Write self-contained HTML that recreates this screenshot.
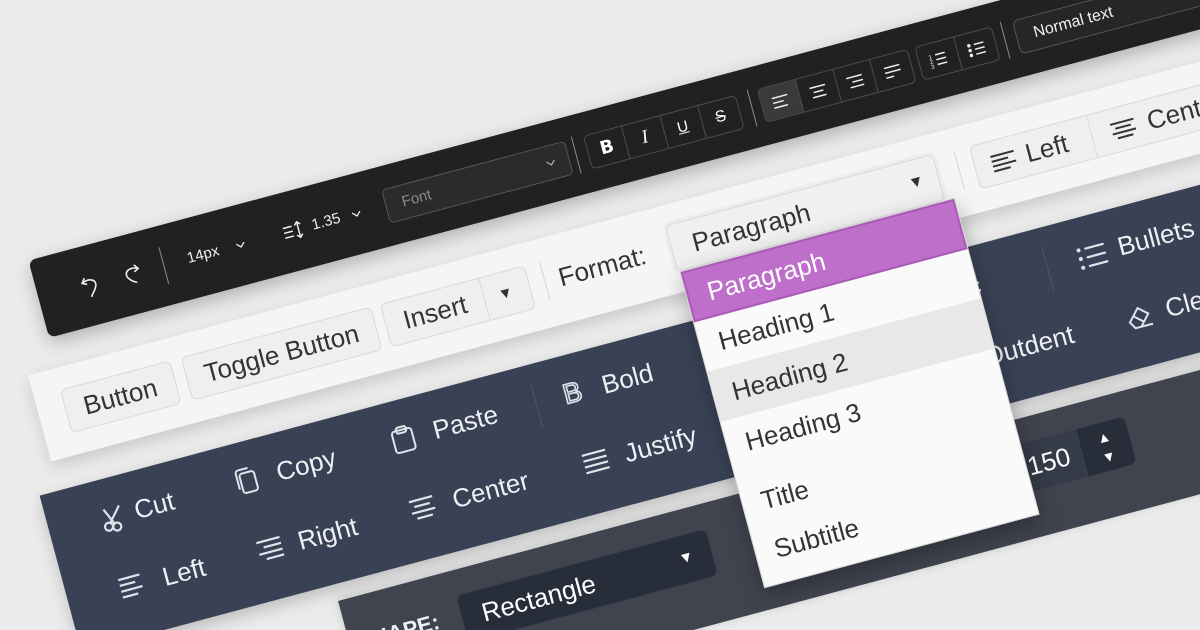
<!DOCTYPE html>
<html><head><meta charset="utf-8"><style>
*{box-sizing:border-box;margin:0;padding:0}
html,body{width:1200px;height:630px;overflow:hidden;background:#ebebeb;font-family:"Liberation Sans","DejaVu Sans",sans-serif}
#clip{position:relative;width:1200px;height:630px;overflow:hidden}
#w{position:absolute;left:0;top:0;width:10px;height:10px;transform-origin:0 0;transform:rotate(-15deg)}
.a{position:absolute;white-space:nowrap}
.bar1{left:-40px;top:259px;width:1500px;height:80px;background:#212121;border-radius:7px;box-shadow:0 6px 18px rgba(0,0,0,.25)}
.t1{color:#f2f2f2;font-size:15px;font-family:"Liberation Sans",sans-serif;line-height:20px}
.sep1{width:1px;height:38px;background:#8a8a8a;top:280px}
.grp{top:282px;height:35px;border:1px solid #4d4d4d;border-radius:5px;display:flex;overflow:hidden}
.grp div{flex:1;border-right:1px solid #4d4d4d;display:flex;align-items:center;justify-content:center;color:#fff}
.grp div:last-child{border-right:none}
.bar2{left:-70px;top:370px;width:1600px;height:89px;background:#f5f5f5;box-shadow:0 6px 16px rgba(0,0,0,.15)}
.btn{top:392px;height:45px;background:#efefef;border:1px solid #d9d9d9;border-radius:6px;color:#333;font-size:26px;line-height:43px;padding-left:18px}
.bar3{left:-90px;top:489px;width:1600px;height:162px;background:#394255;box-shadow:0 6px 16px rgba(0,0,0,.2)}
.tw{color:#eef0f4;font-size:26px;line-height:30px}
.bar4{left:171px;top:668px;width:1400px;height:120px;background:#40444f;box-shadow:0 -2px 10px rgba(0,0,0,.15)}
.menu{left:586px;top:438px;width:285px;height:328px;background:#fafafa;border:1px solid #d7d7d7;box-shadow:0 8px 22px rgba(0,0,0,.28)}
.mi{position:absolute;left:0;width:283px;font-size:26px;color:#333;padding-left:19px}
svg{position:absolute;overflow:visible}
</style></head><body><div id="clip">
<div id="w">
<div class="a bar1"></div>
<svg style="left:4px;top:289px" width="20" height="22" viewBox="0 0 20 22" fill="none" stroke="#eee" stroke-width="1.6" stroke-linecap="round"><path d="M5 2 L2 6 L6 8"/><path d="M2 6 C10 2 18 6 14 13 C12 17 9 19 8 21"/></svg>
<svg style="left:46px;top:289px" width="20" height="22" viewBox="0 0 20 22" fill="none" stroke="#eee" stroke-width="1.6" stroke-linecap="round"><path d="M15 2 L18 6 L14 8"/><path d="M18 6 C10 2 2 6 6 13 C8 16 11 18 13 19"/></svg>
<div class="a sep1" style="left:89px"></div>
<div class="a t1" style="left:114px;top:289px">14px</div>
<svg style="left:164px;top:296px" width="10" height="6" viewBox="0 0 10 6" fill="none" stroke="#eee" stroke-width="1.3"><path d="M1 1L5 5L9 1"/></svg>
<svg style="left:213px;top:289px" width="22" height="20" viewBox="0 0 22 20" fill="none" stroke="#eee" stroke-width="1.5"><path d="M1 5H10M1 10H10M1 15H10"/><path d="M16 2V18M13 5L16 2L19 5M13 15L16 18L19 15"/></svg>
<div class="a t1" style="left:243px;top:289px">1.35</div>
<svg style="left:284px;top:296px" width="10" height="6" viewBox="0 0 10 6" fill="none" stroke="#eee" stroke-width="1.3"><path d="M1 1L5 5L9 1"/></svg>
<div class="a" style="left:319px;top:282px;width:190px;height:35px;border:1px solid #555;background:#2b2b2b;border-radius:5px;color:#8a8a8a;font-size:15px;line-height:33px;padding-left:16px">Font<svg style="left:165px;top:14px" width="10" height="6" viewBox="0 0 10 6" fill="none" stroke="#aaa" stroke-width="1.3"><path d="M1 1L5 5L9 1"/></svg></div>
<div class="a sep1" style="left:516px"></div>
<div class="a grp" style="left:528px;width:158px"><div style="font-weight:bold;font-size:18px;font-family:'DejaVu Sans',sans-serif">B</div><div style="font-style:italic;font-size:19px;font-family:'Liberation Serif',serif">I</div><div style="text-decoration:underline;font-size:15px">U</div><div style="text-decoration:line-through;font-size:16px">S</div></div>
<div class="a sep1" style="left:698px"></div>
<div class="a grp" style="left:708px;width:156px">
<div style="background:#3a3a3a"><svg style="position:static" width="18" height="14" viewBox="0 0 18 14" stroke="#eee" stroke-width="1.5"><path d="M1 2H17M1 7H12M1 12H15"/></svg></div>
<div><svg style="position:static" width="18" height="14" viewBox="0 0 18 14" stroke="#eee" stroke-width="1.5"><path d="M1 2H17M4 7H14M2 12H16"/></svg></div>
<div><svg style="position:static" width="18" height="14" viewBox="0 0 18 14" stroke="#eee" stroke-width="1.5"><path d="M1 2H17M6 7H17M3 12H17"/></svg></div>
<div><svg style="position:static" width="18" height="14" viewBox="0 0 18 14" stroke="#eee" stroke-width="1.5"><path d="M1 2H17M1 7H17M1 12H9"/></svg></div></div>
<div class="a grp" style="left:871px;width:80px">
<div><svg style="position:static" width="18" height="16" viewBox="0 0 18 16" stroke="#eee" stroke-width="1.5"><path d="M7 3H17M7 8H17M7 13H17"/><text x="0" y="6" font-size="6" fill="#eee" stroke="none">1</text><text x="0" y="11" font-size="6" fill="#eee" stroke="none">2</text><text x="0" y="16" font-size="6" fill="#eee" stroke="none">3</text></svg></div>
<div><svg style="position:static" width="18" height="16" viewBox="0 0 18 16" stroke="#eee" stroke-width="1.5"><path d="M7 3H17M7 8H17M7 13H17"/><circle cx="2" cy="3" r="1" fill="#eee"/><circle cx="2" cy="8" r="1" fill="#eee"/><circle cx="2" cy="13" r="1" fill="#eee"/></svg></div></div>
<div class="a sep1" style="left:960px"></div>
<div class="a" style="left:972px;top:282px;width:400px;height:35px;border:1px solid #555;background:#262626;border-radius:6px;color:#f2f2f2;font-size:16px;line-height:33px;padding-left:17px">Normal text</div>

<div class="a bar2"></div>
<div class="a btn" style="left:-43px;width:114px">Button</div>
<div class="a btn" style="left:82px;width:197px">Toggle Button</div>
<div class="a btn" style="left:288px;width:150px">Insert<div class="a" style="left:101px;top:0;width:1px;height:43px;background:#d9d9d9"></div><span class="a" style="left:116px;top:0;font-size:15px;color:#333">&#9660;</span></div>
<div class="a" style="left:453px;top:393px;width:1px;height:40px;background:#d5d5d5"></div>
<div class="a" style="left:468px;top:398px;font-size:26px;color:#333">Format:</div>
<div class="a btn" style="left:584px;top:390px;width:277px;height:48px;background:#f0f0f0;line-height:46px;padding-left:21px;box-shadow:0 0 0 3px #ececec">Paragraph<span class="a" style="left:245px;top:0;font-size:16px;color:#333">&#9660;</span></div>
<div class="a" style="left:882px;top:393px;width:1px;height:40px;background:#d5d5d5"></div>
<div class="a btn" style="left:898px;width:500px;padding-left:0">
<svg style="left:16px;top:13px" width="26" height="20" viewBox="0 0 26 20" stroke="#333" stroke-width="2"><path d="M1 2H25M1 7H18M1 12H25M1 17H18"/></svg>
<span class="a" style="left:52px;top:0">Left</span>
<div class="a" style="left:120px;top:0;width:1px;height:43px;background:#d9d9d9"></div>
<svg style="left:140px;top:13px" width="26" height="20" viewBox="0 0 26 20" stroke="#333" stroke-width="2"><path d="M1 2H25M5 7H21M1 12H25M5 17H21"/></svg>
<span class="a" style="left:178px;top:0">Center</span></div>

<div class="a bar3"></div>
<svg style="left:-36px;top:517px" width="24" height="26" viewBox="0 0 24 26" fill="none" stroke="#dfe3ea" stroke-width="2.2"><circle cx="5" cy="20" r="4"/><circle cx="13" cy="22" r="4"/><path d="M7 17L20 2M11 18L4 2"/></svg>
<div class="a tw" style="left:-2px;top:513px">Cut</div>
<svg style="left:102px;top:514px" width="24" height="28" viewBox="0 0 24 28" fill="none" stroke="#dfe3ea" stroke-width="2"><rect x="6" y="6" width="15" height="20" rx="3"/><path d="M3 21V5a3 3 0 0 1 3-3h10"/></svg>
<div class="a tw" style="left:145px;top:513px">Copy</div>
<svg style="left:264px;top:514px" width="24" height="28" viewBox="0 0 24 28" fill="none" stroke="#dfe3ea" stroke-width="2"><rect x="2" y="5" width="20" height="22" rx="3"/><rect x="7" y="2" width="10" height="6" rx="2"/></svg>
<div class="a tw" style="left:307px;top:513px">Paste</div>
<div class="a" style="left:413px;top:508px;width:1px;height:46px;background:#4d5669"></div>
<div class="a" style="left:442px;top:513px;font-size:28px;color:transparent;-webkit-text-stroke:1.6px #dfe3ea;line-height:30px">B</div>
<div class="a tw" style="left:482px;top:513px">Bold</div>
<div class="a tw" style="left:820px;top:513px">Italic</div>
<div class="a" style="left:942px;top:508px;width:1px;height:46px;background:#4d5669"></div>
<svg style="left:974px;top:518px" width="30" height="24" viewBox="0 0 30 24" stroke="#dfe3ea" stroke-width="2.2" stroke-linecap="round"><path d="M10 3H28M10 12H28M10 21H28"/><circle cx="3" cy="3" r="2" fill="#dfe3ea" stroke="none"/><circle cx="3" cy="12" r="2" fill="#dfe3ea" stroke="none"/><circle cx="3" cy="21" r="2" fill="#dfe3ea" stroke="none"/></svg>
<div class="a tw" style="left:1016px;top:513px">Bullets</div>
<svg style="left:-37px;top:589px" width="26" height="24" viewBox="0 0 26 24" stroke="#dfe3ea" stroke-width="2.2"><path d="M1 2H23M1 8H17M1 14H23M1 20H17"/></svg>
<div class="a tw" style="left:8px;top:585px">Left</div>
<svg style="left:106px;top:589px" width="26" height="24" viewBox="0 0 26 24" stroke="#dfe3ea" stroke-width="2.2"><path d="M1 2H25M7 8H25M1 14H25M7 20H25"/></svg>
<div class="a tw" style="left:148px;top:585px">Right</div>
<svg style="left:264px;top:589px" width="26" height="24" viewBox="0 0 26 24" stroke="#dfe3ea" stroke-width="2.2"><path d="M1 2H25M5 8H21M1 14H25M5 20H21"/></svg>
<div class="a tw" style="left:308px;top:585px">Center</div>
<svg style="left:443px;top:589px" width="26" height="24" viewBox="0 0 26 24" stroke="#dfe3ea" stroke-width="2.2"><path d="M1 2H25M1 8H25M1 14H25M1 20H25"/></svg>
<div class="a tw" style="left:486px;top:585px">Justify</div>
<div class="a tw" style="left:858px;top:585px">Outdent</div>
<svg style="left:1004px;top:588px" width="28" height="26" viewBox="0 0 28 26" fill="none" stroke="#dfe3ea" stroke-width="2"><path d="M4 16L15 4L24 12L14 23H8Z M9 11L18 19 M8 23H26"/></svg>
<div class="a tw" style="left:1046px;top:585px">Clear</div>

<div class="a bar4"></div>
<div class="a" style="left:180px;top:701px;font-size:22px;font-weight:bold;color:#eef0f4">SHAPE:</div>
<div class="a" style="left:286px;top:693px;width:259px;height:49px;background:#272e3a;border-radius:7px;border:1px solid #353c4a;color:#fff;font-size:26px;line-height:47px;padding-left:20px">Rectangle<span class="a" style="left:224px;top:-1px;font-size:15px">&#9660;</span></div>
<div class="a" style="left:780px;top:693px;width:198px;height:49px;background:#353b48;border-radius:7px;overflow:hidden">
<div class="a" style="left:92px;top:0;color:#fff;font-size:26px;line-height:49px">150</div>
<div class="a" style="left:147px;top:0;width:51px;height:49px;background:#272e3a;border-left:1px solid #3f4655;color:#fff;font-size:14px;text-align:center;line-height:20px;padding-top:5px;white-space:normal">&#9650;<br>&#9660;</div></div>

<div class="a menu">
<div class="mi" style="top:0;height:52px;background:#bd6fc9;border:2px solid #a95bb6;color:#fff;line-height:48px">Paragraph</div>
<div class="mi" style="top:52px;height:51px;line-height:51px">Heading 1</div>
<div class="mi" style="top:103px;height:52px;line-height:52px;background:#e8e8e8">Heading 2</div>
<div class="mi" style="top:155px;height:52px;line-height:52px">Heading 3</div>
<div class="mi" style="top:216px;height:52px;line-height:52px">Title</div>
<div class="mi" style="top:266px;height:52px;line-height:52px">Subtitle</div>
</div>
</div>
</div></body></html>
